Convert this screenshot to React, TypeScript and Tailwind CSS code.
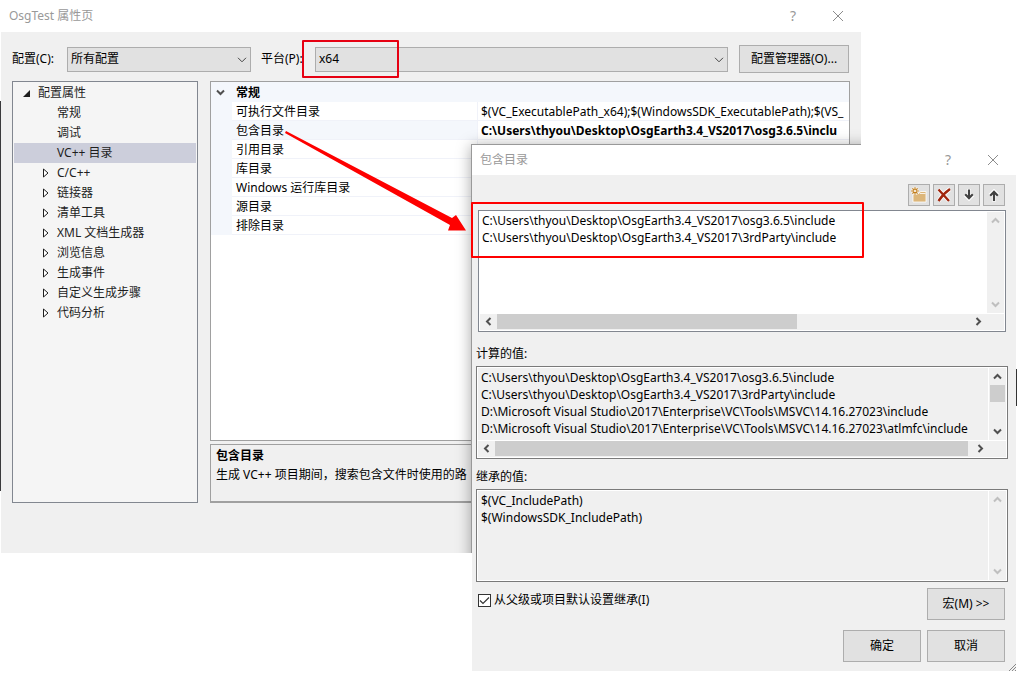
import type { ReactNode } from "react";

const treeItems = [
  { label: "常规" },
  { label: "调试" },
  { label: "VC++ 目录", selected: true },
  { label: "C/C++", expandable: true },
  { label: "链接器", expandable: true },
  { label: "清单工具", expandable: true },
  { label: "XML 文档生成器", expandable: true },
  { label: "浏览信息", expandable: true },
  { label: "生成事件", expandable: true },
  { label: "自定义生成步骤", expandable: true },
  { label: "代码分析", expandable: true },
];

const properties = [
  {
    name: "可执行文件目录",
    value: "$(VC_ExecutablePath_x64);$(WindowsSDK_ExecutablePath);$(VS_",
  },
  {
    name: "包含目录",
    value: "C:\\Users\\thyou\\Desktop\\OsgEarth3.4_VS2017\\osg3.6.5\\inclu",
    selected: true,
  },
  { name: "引用目录", value: "" },
  { name: "库目录", value: "" },
  { name: "Windows 运行库目录", value: "" },
  { name: "源目录", value: "" },
  { name: "排除目录", value: "" },
];

const includeDirs = [
  "C:\\Users\\thyou\\Desktop\\OsgEarth3.4_VS2017\\osg3.6.5\\include",
  "C:\\Users\\thyou\\Desktop\\OsgEarth3.4_VS2017\\3rdParty\\include",
].join("\n");

const computedDirs = [
  includeDirs,
  "D:\\Microsoft Visual Studio\\2017\\Enterprise\\VC\\Tools\\MSVC\\14.16.27023\\include",
  "D:\\Microsoft Visual Studio\\2017\\Enterprise\\VC\\Tools\\MSVC\\14.16.27023\\atlmfc\\include",
].join("\n");

const inheritedDirs = "$(VC_IncludePath)\n$(WindowsSDK_IncludePath)";

const rotations = {
  down: "",
  up: "rotate-180",
  left: "rotate-90",
  right: "-rotate-90",
};

function Chevron({
  dir,
  className = "text-[#505050]",
}: {
  dir: keyof typeof rotations;
  className?: string;
}) {
  return (
    <svg
      viewBox="0 0 9 9"
      className={`size-[9px] shrink-0 ${rotations[dir]} ${className}`}
      fill="none"
      stroke="currentColor"
      strokeWidth="2"
    >
      <path d="M1 2.5 4.5 6 8 2.5" />
    </svg>
  );
}

function TitleBar({ title, className }: { title: string; className: string }) {
  return (
    <header
      className={`flex items-center justify-between bg-white text-[#999] ${className}`}
    >
      <h2>{title}</h2>
      <div className="flex gap-[33px]">
        <button aria-label="帮助" className="w-3 text-center text-[14px]">
          ?
        </button>
        <button aria-label="关闭">
          <svg
            viewBox="0 0 12 12"
            className="size-3"
            fill="none"
            stroke="#8c8c8c"
          >
            <path d="M1 1 11 11M11 1 1 11" />
          </svg>
        </button>
      </div>
    </header>
  );
}

function Select({
  id,
  value,
  className,
}: {
  id: string;
  value: string;
  className: string;
}) {
  return (
    <div className={`relative ${className}`}>
      <select
        id={id}
        className="block h-[25px] w-full appearance-none border border-[#adadad] bg-[#e1e1e1] pl-[3px]"
      >
        <option>{value}</option>
      </select>
      <svg
        viewBox="0 0 10 6"
        className="pointer-events-none absolute top-[10px] right-1 h-[6px] w-[10px]"
        fill="none"
        stroke="#444"
      >
        <path d="M1 .8 5 4.8 9 .8" />
      </svg>
    </div>
  );
}

function Button({
  children,
  className,
}: {
  children: ReactNode;
  className: string;
}) {
  return (
    <button
      className={`border border-[#adadad] bg-[#e1e1e1] whitespace-nowrap ${className}`}
    >
      {children}
    </button>
  );
}

function ToolButton({
  label,
  children,
}: {
  label: string;
  children: ReactNode;
}) {
  return (
    <button
      aria-label={label}
      className="grid size-[22px] place-items-center border border-[#adadad] bg-[#e1e1e1]"
    >
      <svg viewBox="0 0 16 16" className="size-4">
        {children}
      </svg>
    </button>
  );
}

function Tree() {
  return (
    <ul className="w-[186px] shrink-0 border border-[#828790] bg-[#f5f5f5] p-px leading-5 text-[#1e1e1e]">
      <li>
        <div className="flex items-center">
          <span className="flex w-6 justify-center">
            <svg viewBox="0 0 7 7" className="size-[7px]">
              <path d="M7 0V7H0Z" fill="#1e1e1e" />
            </svg>
          </span>
          配置属性
        </div>
        <ul>
          {treeItems.map((item) => (
            <li
              key={item.label}
              className={`flex items-center pl-5 ${item.selected ? "bg-[#cccedb]" : ""}`}
            >
              <span className="flex w-[23px] justify-center">
                {item.expandable && (
                  <svg
                    viewBox="0 0 6 10"
                    className="h-[10px] w-[6px]"
                    fill="#fff"
                    stroke="#1e1e1e"
                  >
                    <path d="M.5 1V9L5 5Z" />
                  </svg>
                )}
              </span>
              {item.label}
            </li>
          ))}
        </ul>
      </li>
    </ul>
  );
}

function PropertyGrid() {
  return (
    <div className="h-[360px] overflow-hidden border border-[#a0a0a0] bg-white">
      <table className="w-full table-fixed border-separate border-spacing-0 whitespace-nowrap">
        <colgroup>
          <col className="w-[21px]" />
          <col className="w-[246px]" />
          <col />
        </colgroup>
        <thead>
          <tr className="h-5 bg-[#f4f7fc] text-left">
            <th className="p-0">
              <button aria-label="折叠" className="flex pl-[5px]">
                <Chevron dir="down" />
              </button>
            </th>
            <th colSpan={2} className="p-0 pt-px pl-1 font-bold">
              常规
            </th>
          </tr>
        </thead>
        <tbody>
          {properties.map((prop) => (
            <tr key={prop.name} className="h-[19px] leading-4">
              <td className="bg-[#f4f7fc] p-0" />
              <td
                className={`border-r border-b border-[#f0f2f9] p-0 pt-[2px] pl-1 ${prop.selected ? "bg-[#f4f7fc]" : ""}`}
              >
                {prop.name}
              </td>
              <td
                className={`border-b border-[#f0f2f9] p-0 pt-[2px] pl-[3px] ${prop.selected ? "font-bold" : ""}`}
              >
                {prop.value}
              </td>
            </tr>
          ))}
        </tbody>
      </table>
    </div>
  );
}

function ScrollText({
  label,
  value,
  className,
  fieldClass,
  thumbClass,
  vThumb,
  horizontal,
}: {
  label: string;
  value: string;
  className: string;
  fieldClass: string;
  thumbClass?: string;
  vThumb?: boolean;
  horizontal?: boolean;
}) {
  const arrow = vThumb ? "text-[#505050]" : "text-[#bfbfbf]";
  return (
    <div className={`flex flex-col border p-px ${className}`}>
      <div className="flex min-h-0 flex-1">
        <textarea
          aria-label={label}
          wrap="off"
          defaultValue={value}
          className={`block min-w-0 flex-1 resize-none overflow-hidden leading-[17px] whitespace-pre outline-none ${fieldClass}`}
        />
        <div className="flex w-[18px] flex-col items-center justify-between border-l border-white bg-[#f0f0f0] pt-1 pr-px">
          <div className="flex w-full flex-col items-center gap-1">
            <Chevron dir="up" className={arrow} />
            {vThumb && <div className="h-[17px] w-[15px] bg-[#cdcdcd]" />}
          </div>
          <Chevron dir="down" className={`mb-1 ${arrow}`} />
        </div>
      </div>
      {horizontal && (
        <div className="flex h-[17px] shrink-0 items-center border-t border-white bg-[#f0f0f0] pr-[21px] pb-px pl-1">
          <Chevron dir="left" />
          <div className="mr-2 ml-1 h-[15px] flex-1">
            <div className={`h-full bg-[#cdcdcd] ${thumbClass}`} />
          </div>
          <Chevron dir="right" />
        </div>
      )}
    </div>
  );
}

function PropertyWindow() {
  return (
    <section className="relative mr-[156px] ml-px overflow-hidden bg-[#f0f0f0]">
      <TitleBar title="OsgTest 属性页" className="h-8 pr-[17px] pl-2" />
      <div className="flex h-[521px] flex-col pr-[11px] pb-[50px] pl-[11px]">
        <div className="flex items-center pt-[13px] pr-px">
          <label htmlFor="config" className="w-[55px]">
            配置(C):
          </label>
          <Select id="config" value="所有配置" className="w-[184px]" />
          <label htmlFor="platform" className="ml-[10px] w-[54px]">
            平台(P):
          </label>
          <Select id="platform" value="x64" className="flex-1" />
          <Button className="ml-[11px] h-7 w-[110px]">配置管理器(O)...</Button>
        </div>
        <div className="mt-2 flex min-h-0 flex-1 gap-3">
          <Tree />
          <div className="flex min-w-0 flex-1 flex-col gap-[3px]">
            <PropertyGrid />
            <div className="flex-1 border border-b-2 border-[#a0a0a0] px-[5px] pt-px leading-[19px] whitespace-nowrap">
              <h3 className="font-bold">包含目录</h3>
              <p>生成 VC++ 项目期间，搜索包含文件时使用的路</p>
            </div>
          </div>
        </div>
      </div>
      {/* shadow of the dialog, clipped to this window */}
      <div className="absolute top-36 left-[470px] h-[527px] w-[546px] border border-[#999] shadow-[0_2px_14px_rgba(0,0,0,0.35)]" />
    </section>
  );
}

function IncludeDialog() {
  return (
    <section
      role="dialog"
      aria-label="包含目录"
      className="absolute top-[145px] right-px left-[472px] bg-[#f0f0f0]"
    >
      <TitleBar title="包含目录" className="h-[30px] pr-[17px] pl-2" />
      <div className="flex flex-col pr-2 pb-[9px] pl-1">
        <div className="flex justify-end gap-[3px] pt-[9px] pr-[3px]">
          <ToolButton label="新行">
            <path
              d="M2 6.500h6l1.500-2H15V15H2z"
              fill="#dcb67a"
              stroke="#fff"
              strokeWidth=".8"
            />
            <path d="M9 6.500h5.500" stroke="#fff" strokeWidth=".8" />
            <circle cx="4" cy="4" r="4" fill="#f4efe6" />
            <path
              d="M4 .2v7.600M.2 4h7.600M1.400 1.400l5.200 5.200M6.600 1.400l-5.200 5.200"
              stroke="#c27d1a"
              strokeWidth="1.100"
            />
            <circle cx="4" cy="4" r="1.100" fill="#fff" />
          </ToolButton>
          <ToolButton label="删除">
            <path
              d="M2.500 2.500 13 14M14 2C9 5.500 5 10 2.500 14"
              stroke="#fff"
              strokeWidth="4"
              fill="none"
            />
            <path
              d="M2.500 2.500 13 14M14 2C9 5.500 5 10 2.500 14"
              stroke="#a1260d"
              strokeWidth="2.400"
              fill="none"
            />
          </ToolButton>
          <ToolButton label="下移">
            <path
              d="M8 2v10M4 7.500 8 11.500l4-4"
              stroke="#fff"
              strokeWidth="4"
              fill="none"
            />
            <path
              d="M8 2.500v9M4.200 7.200 8 11.200 11.800 7.200"
              stroke="#424242"
              strokeWidth="2.200"
              fill="none"
            />
          </ToolButton>
          <ToolButton label="上移">
            <path
              d="M8 14.500V5M4 8.500 8 4.500l4 4"
              stroke="#fff"
              strokeWidth="4"
              fill="none"
            />
            <path
              d="M8 14V5M4.200 8.800 8 4.800 11.800 8.800"
              stroke="#424242"
              strokeWidth="2.200"
              fill="none"
            />
          </ToolButton>
        </div>
        <ScrollText
          label="包含目录"
          value={includeDirs}
          className="mt-1 mr-[2px] ml-[2px] h-[122px] border-[#828790] bg-white"
          fieldClass="bg-white pl-[2px]"
          thumbClass="w-[300px]"
          horizontal
        />
        <h3 className="mt-[13px] leading-[18px]">计算的值:</h3>
        <ScrollText
          label="计算的值"
          value={computedDirs}
          className="mt-[3px] h-[93px] border-[#7a7a7a] bg-white"
          fieldClass="bg-[#f0f0f0] pl-[3px] pt-px"
          thumbClass="w-full"
          vThumb
          horizontal
        />
        <h3 className="mt-[9px] leading-[18px]">继承的值:</h3>
        <ScrollText
          label="继承的值"
          value={inheritedDirs}
          className="mt-[3px] h-[93px] border-[#7a7a7a] bg-white"
          fieldClass="bg-[#f0f0f0] pl-[3px] pt-px"
        />
        <div className="mt-[6px] flex items-start justify-between pr-[3px] pl-[2px]">
          <label className="mt-[3px] flex items-center gap-[3px] leading-[18px]">
            <span className="relative grid size-[13px] place-items-center">
              <input
                type="checkbox"
                defaultChecked
                className="peer size-[13px] appearance-none border border-[#333] bg-white"
              />
              <svg
                viewBox="0 0 13 13"
                className="pointer-events-none absolute hidden size-[13px] peer-checked:block"
                fill="none"
                stroke="#333"
                strokeWidth="1.200"
              >
                <path d="M2 6.500 5 9.500 11 3.500" />
              </svg>
            </span>
            从父级或项目默认设置继承(I)
          </label>
          <Button className="h-8 w-[78px]">宏(M) &gt;&gt;</Button>
        </div>
        <div className="mt-[10px] flex justify-end gap-[6px] pr-[3px]">
          <Button className="h-8 w-[78px]">确定</Button>
          <Button className="h-8 w-[78px]">取消</Button>
        </div>
      </div>
      <svg
        viewBox="0 0 7 7"
        className="absolute right-0 bottom-0 size-[7px]"
        stroke="#888"
      >
        <path d="M0 7 7 0M3 7 7 3M6 7 7 6" />
      </svg>
    </section>
  );
}

export default function App() {
  return (
    <main className="relative min-h-screen overflow-hidden bg-white font-['Noto_Sans','Noto_Sans_CJK_SC',sans-serif] text-[12px] leading-[18px] text-black">
      <PropertyWindow />
      <div className="absolute top-[101px] left-0 h-[390px] w-px bg-[#3a3a3c]" />
      <div className="absolute top-[369px] right-0 h-[37px] w-px bg-[#333]" />
      <IncludeDialog />

      {/* red markup */}
      <div className="absolute top-10 left-[302px] h-[38px] w-[97px] rounded-[1px] border-2 border-[#e60012]" />
      <div className="absolute top-[202px] left-[471px] h-14 w-[393px] rounded-[1px] border-2 border-[#fe0000]" />
      <svg
        viewBox="0 0 182 100"
        className="absolute top-[131px] left-[285px] h-[100px] w-[182px]"
      >
        <path d="M1 0 167 87 171 84 181 99.500H163L165 94 0 2Z" fill="#fe0000" />
      </svg>
    </main>
  );
}
